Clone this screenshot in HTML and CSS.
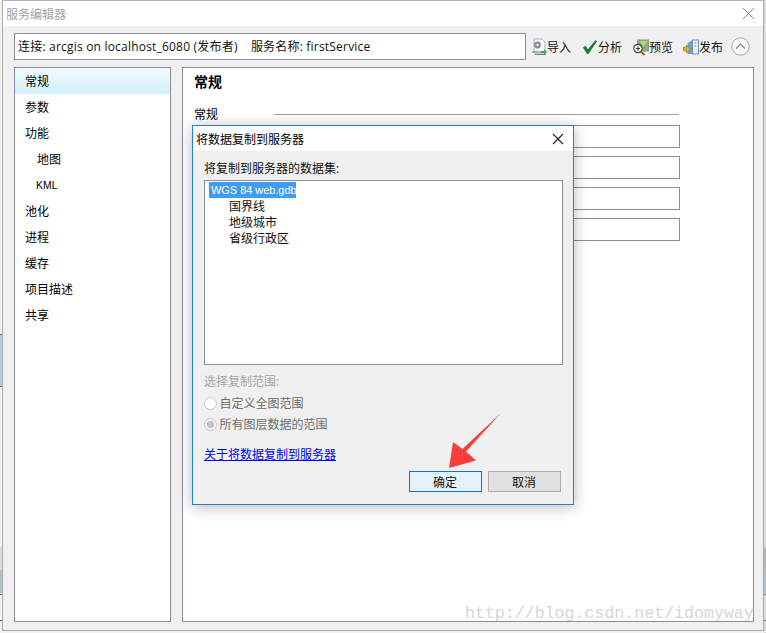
FILE: index.html
```html
<!DOCTYPE html>
<html lang="zh">
<head>
<meta charset="utf-8">
<title>服务编辑器</title>
<link rel="stylesheet" href="styles.css">
</head>
<body>
<div class="backdrop"></div>
<div class="window">
  <header class="titlebar">
    <span class="title">服务编辑器</span>
    <svg class="close" width="13" height="13" viewBox="0 0 13 13"><path d="M1 1l11 11M12 1L1 12" stroke="#8a8a8a" stroke-width="1" fill="none"/></svg>
  </header>
  <div class="body">
    <div class="toolbar">
      <div class="conn">连接: arcgis on localhost_6080 (发布者) &nbsp;&nbsp; 服务名称: firstService</div>
      <div class="tools">
        <span class="tool"><svg width="16" height="18" viewBox="0 0 16 18"><path d="M3 1h8l3 3v11H3z" fill="#f4f8fc" stroke="#9fb4c6"/><circle cx="6.500" cy="7" r="3.400" fill="#8c8c8c"/><circle cx="6.500" cy="7" r="1.300" fill="#e6e6e6"/><path d="M1 14h9M4 16.500h11" stroke="#6f7f8c"/><path d="M10 13h3v-2l3 3-3 3v-2h-3z" fill="#4aa84a"/></svg>导入</span>
        <span class="tool"><svg width="16" height="16" viewBox="0 0 16 16"><path d="M1 8.500l2.500-1.800 2.500 3.500L13.500 1l1.500 1.200L6.500 15h-1.500z" fill="#1f7a34"/></svg>分析</span>
        <span class="tool"><svg width="16" height="18" viewBox="0 0 16 18"><rect x="4.500" y="2" width="11" height="11" fill="#7fb86a" stroke="#8a9a8a"/><path d="M6.500 3h8l-4 6z" fill="#b8d86a"/><circle cx="5" cy="10.500" r="4.200" fill="#f6f6f6" stroke="#444" stroke-width="1.200"/><path d="M3 10.500h4M5 8.500v4" stroke="#333"/><path d="M8.500 14l3 3" stroke="#b5492a" stroke-width="2"/></svg>预览</span>
        <span class="tool"><svg width="16" height="18" viewBox="0 0 16 18"><path d="M4.500 5l5-3v14h-5z" fill="#6f9fd8"/><rect x="9.500" y="2" width="6" height="14" fill="#e8f0f8" stroke="#6f8fb8"/><path d="M11.500 5h2M11.500 8h2" stroke="#4a9a5a"/><path d="M.5 9h3V7l4 4-4 4v-2h-3z" fill="#d8b030" stroke="#8a7020" stroke-width=".6"/></svg>发布</span>
        <svg class="collapse" width="19" height="19" viewBox="0 0 19 19"><circle cx="9.500" cy="9.500" r="8.700" fill="#f7f7f7" stroke="#a8a8a8"/><path d="M5 11.500l4.500-4.500 4.500 4.500" fill="none" stroke="#8c8c8c" stroke-width="1.200"/></svg>
      </div>
    </div>
    <div class="panes">
      <nav class="nav">
        <div class="nav-item active">常规</div>
        <div class="nav-item">参数</div>
        <div class="nav-item">功能</div>
        <div class="nav-item sub">地图</div>
        <div class="nav-item sub kml">KML</div>
        <div class="nav-item">池化</div>
        <div class="nav-item">进程</div>
        <div class="nav-item">缓存</div>
        <div class="nav-item">项目描述</div>
        <div class="nav-item">共享</div>
      </nav>
      <main class="content">
        <h2 class="heading">常规</h2>
        <div class="group"><span>常规</span><i class="rule"></i></div>
        <div class="fields">
          <div class="field"></div>
          <div class="field"></div>
          <div class="field"></div>
          <div class="field"></div>
        </div>
      </main>
    </div>
  </div>
</div>

<section class="dialog">
  <header class="dlg-title">
    <span>将数据复制到服务器</span>
    <svg width="12" height="12" viewBox="0 0 12 12"><path d="M1 1l10 10M11 1L1 11" stroke="#222" stroke-width="1.100" fill="none"/></svg>
  </header>
  <div class="dlg-body">
    <div class="dlg-label">将复制到服务器的数据集:</div>
    <div class="tree">
      <div class="tree-root">WGS 84 web.gdb</div>
      <div class="tree-leaf">国界线</div>
      <div class="tree-leaf">地级城市</div>
      <div class="tree-leaf">省级行政区</div>
    </div>
    <div class="scope-label">选择复制范围:</div>
    <div class="radio"><i class="dot"></i>自定义全图范围</div>
    <div class="radio"><i class="dot on"></i>所有图层数据的范围</div>
    <a class="about" href="#">关于将数据复制到服务器</a>
    <div class="buttons">
      <button class="btn primary">确定</button>
      <button class="btn">取消</button>
    </div>
  </div>
</section>

<svg class="arrow" width="56" height="58" viewBox="0 0 56 58"><path d="M55 1L20 39.500 30 48.500 3 56 7 30 16.500 37z" fill="#f93c3c"/></svg>
<div class="watermark">http://blog.csdn.net/idomyway</div>
</body>
</html>
```
FILE: styles.css
```css
* { box-sizing: border-box; }
html, body { margin: 0; height: 100%; }
body {
  position: relative;
  width: 766px;
  height: 633px;
  overflow: hidden;
  background: #e4e4e4;
  font-family: "Open Sans", "Noto Sans CJK SC", sans-serif;
  font-size: 12px;
  color: #000;
}
.backdrop {
  position: absolute;
  inset: 0;
  background:
    linear-gradient(#1a9a8a, #1a9a8a) 0 334px / 2px 1px no-repeat,
    linear-gradient(#1a9a8a, #1a9a8a) 0 386px / 2px 1px no-repeat,
    linear-gradient(#a9cfe0, #a9cfe0) 0 335px / 2px 51px no-repeat,
    linear-gradient(#6a6a6a, #6a6a6a) 0 594px / 100% 1px no-repeat,
    linear-gradient(#6a6a6a, #6a6a6a) 0 620px / 100% 1px no-repeat,
    linear-gradient(#b0bfcc, #b0bfcc) 0 570px / 100% 23px no-repeat,
    linear-gradient(#b4b4b4, #b4b4b4) 764px 548px / 2px 22px no-repeat,
    linear-gradient(#dcdcdc, #dcdcdc) 0 547px / 2px 23px no-repeat,
    linear-gradient(#dcdcdc, #dcdcdc) 764px 0 / 2px 100% no-repeat,
    linear-gradient(#f2f2f2, #f2f2f2);
}
.window {
  position: relative;
  margin-left: 2px;
  width: 762px;
  height: 631px;
  border: 1px solid #a9a9a9;
  border-top-color: #b5b5b5;
  display: flex;
  flex-direction: column;
  background: #f0f0f0;
}
.titlebar {
  height: 25px;
  flex: none;
  background: #fff;
  display: flex;
  align-items: center;
  justify-content: space-between;
  padding: 0 8px 0 3px;
}
.title { color: #a3a3a3; font-size: 12px; }
.body {
  flex: 1;
  display: flex;
  flex-direction: column;
  padding: 7px 9px 8px 11px;
  min-height: 0;
}
.toolbar { display: flex; align-items: center; height: 27px; flex: none; }
.conn {
  width: 512px;
  height: 27px;
  line-height: 25px;
  border: 1px solid #8c8c9a;
  background: #fff;
  padding-left: 3px;
  white-space: nowrap;
  font-size: 12px;
  letter-spacing: .2px;
  color: #111;
}
.tools {
  display: grid;
  grid-template-columns: 51px 51px 50px 47px 19px;
  align-items: center;
  margin-left: 5px;
}
.tool { display: flex; align-items: center; white-space: nowrap; color: #111; }
.tool svg { flex: none; }
.collapse { margin-left: 1px; }
.panes { flex: 1; display: flex; gap: 11px; margin-top: 7px; min-height: 0; }
.nav {
  width: 157px;
  flex: none;
  border: 1px solid #8c8c9a;
  background: #fff;
}
.nav-item { height: 26px; line-height: 28px; padding-left: 10px; }
.nav-item.active { background: linear-gradient(#f4fbff, #d2effc); }
.nav-item.sub { padding-left: 22px; }
.nav-item.kml {
  padding-left: 21px;
  font-family: "Liberation Sans", sans-serif;
  font-size: 10.500px;
  line-height: 26px;
}
.content {
  flex: 1;
  border: 1px solid #8c8c9a;
  background: #fff;
  padding: 4px 73px 0 11px;
}
.heading { margin: 0; font-size: 14px; line-height: 20px; font-weight: 700; }
.group { display: flex; align-items: center; margin-top: 13px; height: 18px; }
.group span { width: 80px; flex: none; }
.rule { flex: 1; height: 1px; background: #a0a0a0; margin-right: 1px; }
.fields { display: flex; flex-direction: column; gap: 8px; margin-top: 2px; }
.field { height: 23px; border: 1px solid #8c8c9a; background: #fff; }

.dialog {
  position: absolute;
  left: 192px;
  top: 125px;
  width: 382px;
  height: 380px;
  border: 1px solid #1883d7;
  background: #f0f0f0;
  box-shadow: 0 2px 14px rgba(0, 0, 0, .28);
  display: flex;
  flex-direction: column;
}
.dlg-title {
  height: 25px;
  flex: none;
  background: #fff;
  display: flex;
  align-items: center;
  justify-content: space-between;
  padding: 0 9px 0 3px;
}
.dlg-body { flex: 1; padding: 10px 10px 0 11px; display: flex; flex-direction: column; }
.dlg-label { line-height: 16px; height: 16px; color: #111; }
.tree {
  height: 185px;
  margin-top: 3px;
  border: 1px solid #8c8c9a;
  background: #fff;
  padding-top: 1px;
  flex: none;
}
.tree-root {
  display: block;
  width: 87px;
  margin: 0 0 .6px 4px;
  padding-left: 2px;
  height: 16px;
  line-height: 16px;
  font-family: "Liberation Sans", sans-serif;
  font-size: 11px;
  letter-spacing: -.05px;
  white-space: nowrap;
  color: #fff;
  background: #3f9cf5;
}
.tree-leaf { height: 16.400px; line-height: 16px; padding-left: 24px; color: #111; }
.scope-label { margin-top: 9px; line-height: 16px; color: #a6a6a6; }
.radio { display: flex; align-items: center; margin-top: 5px; height: 16px; color: #6d6d6d; }
.dot {
  width: 13px;
  height: 13px;
  margin-right: 2.500px;
  border-radius: 50%;
  border: 1px solid #c8c8c8;
  background: #fff;
  flex: none;
}
.dot.on { background: radial-gradient(circle, #c4c4c4 0 3.500px, #f4f4f4 4px); }
.about { margin-top: 15px; line-height: 16px; color: #0000f0; text-decoration: underline; width: max-content; }
.buttons { display: flex; justify-content: flex-end; gap: 6px; margin: 8px 2px 0 0; }
.btn {
  width: 73px;
  height: 21px;
  padding: 0 1px 0 0;
  border: 1px solid #adadad;
  background: #e1e1e1;
  font: inherit;
  color: #111;
}
.btn.primary { border-color: #0f78c8; background: #e5f1fb; }
.arrow { position: absolute; left: 446px; top: 412px; }
.watermark {
  position: absolute;
  left: 465px;
  top: 604px;
  width: 289px;
  overflow: hidden;
  font-family: "Liberation Mono", monospace;
  font-size: 16.600px;
  line-height: 20px;
  color: #d6d6d6;
  white-space: nowrap;
}
```
